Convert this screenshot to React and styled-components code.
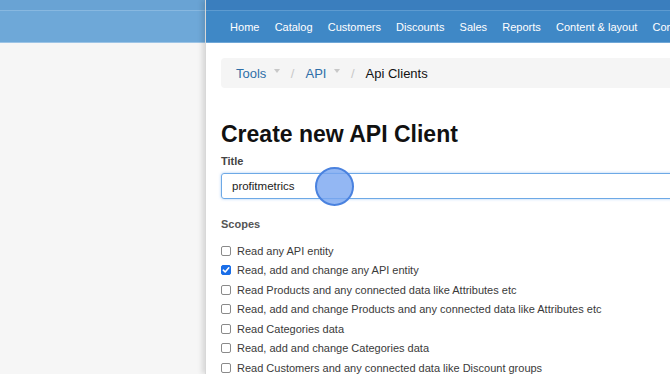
import React from 'react';
import styled, { createGlobalStyle } from 'styled-components';

const GlobalStyle = createGlobalStyle`
  html, body {
    margin: 0;
    padding: 0;
    overflow: hidden;
  }
  body {
    font-family: "Liberation Sans", Arial, Helvetica, sans-serif;
    background: #f6f6f6;
  }
`;

const Screen = styled.div`
  display: flex;
  width: 670px;
  height: 374px;
  overflow: hidden;
`;

const BackPane = styled.div`
  width: 205px;
  flex-shrink: 0;
  display: flex;
  flex-direction: column;
  background: #f6f6f6;
`;

const TopStrip = styled.div`
  flex-shrink: 0;
  height: 10px;
  background: ${p => (p.$dim ? '#69a3d4' : '#3a7ebe')};
  border-bottom: 1px solid ${p => (p.$dim ? '#88b8e0' : '#5d9bd0')};
`;

const NavBar = styled.nav`
  flex-shrink: 0;
  height: 31px;
  display: flex;
  align-items: center;
  padding-left: 16.5px;
  background: ${p => (p.$dim ? '#6ea8d8' : '#3f88c6')};
  border-bottom: 1px solid ${p => (p.$dim ? '#9cc4e6' : '#6fa7d7')};
  white-space: nowrap;
`;

const NavItem = styled.span`
  color: #fff;
  font-size: 11px;
  padding: 0 7.6px;
`;

const MainPane = styled.div`
  flex: 1;
  min-width: 0;
  display: flex;
  flex-direction: column;
  background: #fff;
  box-shadow: -3px 0 5px rgba(0, 0, 0, 0.12);
  position: relative;
  z-index: 1;
  border-left: 1px solid #d8d8d8;
`;

const Content = styled.div`
  flex-shrink: 0;
  padding: 15px 0 0 15px;
  width: 520px;
`;

const Breadcrumb = styled.div`
  height: 30px;
  display: flex;
  align-items: center;
  padding-left: 15px;
  background: #f5f5f5;
  border-radius: 4px;
  font-size: 13px;
`;

const Crumb = styled.span`
  color: ${p => (p.$active ? '#111' : '#2f6fa8')};
`;

const Caret = styled.span`
  display: inline-block;
  width: 0;
  height: 0;
  margin: 0 0 4px 8px;
  border-left: 3.5px solid transparent;
  border-right: 3.5px solid transparent;
  border-top: 4px solid #c8c8c8;
`;

const Divider = styled.span`
  color: #c8c8c8;
  margin: 0 11px 0 10.5px;
`;

const Heading = styled.h1`
  margin: 33px 0 0;
  font-size: 23px;
  font-weight: bold;
  color: #111;
  line-height: 26px;
`;

const FieldLabel = styled.div`
  margin-top: 7px;
  font-size: 11px;
  font-weight: bold;
  color: ${p => (p.$muted ? '#555' : '#444')};
  line-height: 14px;
`;

const InputWrap = styled.div`
  position: relative;
  margin-top: 5px;
`;

const TextInput = styled.div`
  height: 24px;
  display: flex;
  align-items: center;
  padding-left: 10px;
  border: 1px solid #6da9e6;
  border-radius: 3px;
  box-shadow: 0 0 3px rgba(102, 160, 233, 0.55);
  font-size: 11.5px;
  color: #222;
`;

const Cursor = styled.div`
  position: absolute;
  left: 94px;
  top: -6px;
  width: 35px;
  height: 35px;
  border-radius: 50%;
  background: rgba(120, 165, 240, 0.8);
  border: 2px solid #4a82df;
`;

const ScopesLabel = styled(FieldLabel)`
  margin-top: 18px;
`;

const ScopeList = styled.div`
  margin-top: 10px;
  display: flex;
  flex-direction: column;
`;

const ScopeRow = styled.label`
  display: flex;
  align-items: center;
  height: 19.5px;
  flex-shrink: 0;
  font-size: 11px;
  color: #3a3a3a;
  white-space: nowrap;
`;

const Box = styled.span`
  width: 10px;
  height: 10px;
  box-sizing: border-box;
  border-radius: 2px;
  margin-right: 6px;
  display: flex;
  align-items: center;
  justify-content: center;
  background: ${p => (p.$checked ? '#1a6ee8' : '#fff')};
  border: 1px solid ${p => (p.$checked ? '#1a6ee8' : '#8a8a8a')};
`;

const navItems = ['Home', 'Catalog', 'Customers', 'Discounts', 'Sales', 'Reports', 'Content & layout', 'Configuration'];

const scopes = [
  ['Read any API entity', false],
  ['Read, add and change any API entity', true],
  ['Read Products and any connected data like Attributes etc', false],
  ['Read, add and change Products and any connected data like Attributes etc', false],
  ['Read Categories data', false],
  ['Read, add and change Categories data', false],
  ['Read Customers and any connected data like Discount groups', false],
];

const App = () => (
  <Screen>
    <GlobalStyle />
    <BackPane>
      <TopStrip $dim />
      <NavBar $dim />
    </BackPane>
    <MainPane>
      <TopStrip />
      <NavBar>
        {navItems.map(item => (
          <NavItem key={item}>{item}</NavItem>
        ))}
      </NavBar>
      <Content>
        <Breadcrumb>
          <Crumb>Tools</Crumb>
          <Caret />
          <Divider>/</Divider>
          <Crumb>API</Crumb>
          <Caret />
          <Divider>/</Divider>
          <Crumb $active>Api Clients</Crumb>
        </Breadcrumb>
        <Heading>Create new API Client</Heading>
        <FieldLabel>Title</FieldLabel>
        <InputWrap>
          <TextInput>profitmetrics</TextInput>
          <Cursor />
        </InputWrap>
        <ScopesLabel $muted>Scopes</ScopesLabel>
        <ScopeList>
          {scopes.map(([text, checked]) => (
            <ScopeRow key={text}>
              <Box $checked={checked}>
                {checked && (
                  <svg width="8" height="8" viewBox="0 0 8 8">
                    <path d="M1.3 4.2 L3.2 6 L6.8 1.8" fill="none" stroke="#fff" strokeWidth="1.6" strokeLinecap="round" strokeLinejoin="round" />
                  </svg>
                )}
              </Box>
              {text}
            </ScopeRow>
          ))}
        </ScopeList>
      </Content>
    </MainPane>
  </Screen>
);

export default App;
